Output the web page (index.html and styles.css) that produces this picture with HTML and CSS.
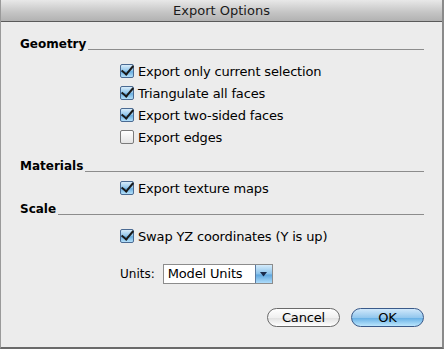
FILE: index.html
```html
<!DOCTYPE html>
<html>
<head>
<meta charset="utf-8">
<link rel="stylesheet" href="styles.css">
</head>
<body>
<div class="window">
  <div class="titlebar">Export Options</div>
  <div class="content">
    <div class="section-head"><span class="label">Geometry</span><span class="rule"></span></div>
    <div class="options geometry">
      <div class="opt"><span class="cb on"></span><span>Export only current selection</span></div>
      <div class="opt"><span class="cb on"></span><span>Triangulate all faces</span></div>
      <div class="opt"><span class="cb on"></span><span>Export two-sided faces</span></div>
      <div class="opt"><span class="cb"></span><span>Export edges</span></div>
    </div>
    <div class="section-head materials-head"><span class="label">Materials</span><span class="rule"></span></div>
    <div class="options materials">
      <div class="opt"><span class="cb on"></span><span>Export texture maps</span></div>
    </div>
    <div class="section-head scale-head"><span class="label">Scale</span><span class="rule"></span></div>
    <div class="options scale">
      <div class="opt"><span class="cb on"></span><span>Swap YZ coordinates (Y is up)</span></div>
      <div class="units"><span class="units-label">Units:</span>
        <div class="select"><span class="sel-text">Model Units</span><span class="sel-btn"><svg width="7" height="5" viewBox="0 0 7 5"><path d="M0 0H7L3.5 4.5Z" fill="#1a2a4a"/></svg></span></div>
      </div>
    </div>
    <div class="buttons">
      <div class="btn">Cancel</div>
      <div class="btn default">OK</div>
    </div>
  </div>
</div>
</body>
</html>
```
FILE: styles.css
```css
html, body { margin: 0; padding: 0; background: #ececec; }
body { font-family: "DejaVu Sans", "Liberation Sans", sans-serif; font-size: 13px; letter-spacing: -0.15px; color: #000; }
.window {
  width: 444px; height: 349px; box-sizing: border-box;
  border-left: 1px solid #9a9a9a; border-right: 2px solid #8a8a8a; border-bottom: 2px solid #6a6a6a;
  background: #ececec; display: flex; flex-direction: column;
}
.titlebar {
  height: 21px; border-bottom: 1px solid #5a5a5a;
  background: linear-gradient(#e8e8e8, #c4c4c4 60%, #b2b2b2);
  text-align: center; line-height: 22px; font-size: 13px; letter-spacing: 0; color: #1a1a1a;
}
.content { padding: 14px 18px 0 19px; display: flex; flex-direction: column; flex: 1; }
.section-head { display: flex; align-items: flex-end; height: 16px; }
.label { font-weight: bold; font-size: 12px; letter-spacing: 0; line-height: 16px; padding-right: 2px; }
.rule { flex: 1; height: 1px; background: #8c8c8c; margin-bottom: 2px; }
.options { padding-left: 100px; display: flex; flex-direction: column; }
.geometry { padding-top: 8px; }
.materials-head { margin-top: 10px; }
.materials { padding-top: 3px; }
.scale-head { margin-top: 2px; }
.scale { padding-top: 8px; }
.opt { display: flex; align-items: center; height: 22px; gap: 4px; }
.cb {
  width: 12px; height: 12px; border: 1px solid #7a7a7a; border-radius: 2px;
  background: linear-gradient(#ffffff, #e4e4e4); box-sizing: content-box; position: relative;
}
.cb.on {
  border-color: #4a6a92;
  background: linear-gradient(#d8ecfa, #8ec4ea 50%, #6aaee0 55%, #b4e0fa);
}
.cb.on::after {
  content: ""; position: absolute; left: 3px; top: -2px; width: 5px; height: 10px;
  border-right: 2.5px solid #1a1a1a; border-bottom: 2.5px solid #1a1a1a;
  transform: rotate(40deg);
}
.units { display: flex; align-items: center; margin-top: 17px; gap: 8px; }
.units-label { font-size: 12px; letter-spacing: 0; }
.select {
  width: 110px; height: 20px; display: flex; border: 1px solid #8c8c8c; background: #fff; box-sizing: border-box;
}
.sel-text { flex: 1; padding-left: 4px; line-height: 18px; }
.sel-btn {
  width: 16px; display: flex; align-items: center; justify-content: center;
  background: linear-gradient(#d4ebfb, #8ac2ea 50%, #5ea6de 55%, #aedcfa); border-left: 1px solid #5a7aa0;
}
.buttons { display: flex; justify-content: flex-end; gap: 11px; margin-top: auto; margin-bottom: 20px; }
.btn {
  width: 73px; height: 19px; box-sizing: border-box; border: 1px solid #6a6a6a; border-radius: 10px;
  background: linear-gradient(#ffffff, #f0f0f0 50%, #e2e2e2 55%, #ffffff);
  text-align: center; line-height: 17px; font-size: 13px;
}
.btn.default {
  border-color: #3a5a8a;
  background: linear-gradient(#d0e8fb, #94c8ee 50%, #6ab2e6 55%, #bce6fd);
}
```
